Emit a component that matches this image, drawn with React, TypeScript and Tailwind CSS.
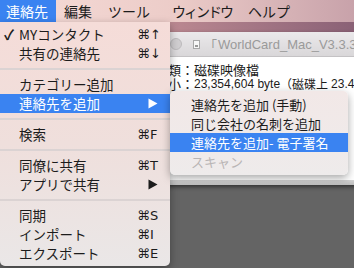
import React from "react";

const Tri = ({ color }: { color: string }) => (
  <svg width="10" height="11" viewBox="0 0 10 11">
    <path d="M0.5 0.5 L9.5 5.5 L0.5 10.5 Z" fill={color} />
  </svg>
);

type Item =
  | { sep: true }
  | { sep?: false; label: string; sc?: string; arrow?: boolean; hl?: boolean; check?: boolean };

const items: Item[] = [
  { label: "MYコンタクト", sc: "⌘↑", check: true },
  { label: "共有の連絡先", sc: "⌘↓" },
  { sep: true },
  { label: "カテゴリー追加" },
  { label: "連絡先を追加", arrow: true, hl: true },
  { sep: true },
  { label: "検索", sc: "⌘F" },
  { sep: true },
  { label: "同僚に共有", sc: "⌘T" },
  { label: "アプリで共有", arrow: true },
  { sep: true },
  { label: "同期", sc: "⌘S" },
  { label: "インポート", sc: "⌘I" },
  { label: "エクスポート", sc: "⌘E" },
];

const sub = [
  { label: "連絡先を追加 (手動)" },
  { label: "同じ会社の名刺を追加" },
  { label: "連絡先を追加- 電子署名", hl: true },
  { label: "スキャン", dis: true },
];

export default function App() {
  return (
    <div className="relative w-[354px] h-[268px] overflow-hidden bg-[#646464] font-['Noto_Sans_CJK_JP','DejaVu_Sans',sans-serif] text-[#1c1c1c]">
      {/* desktop strip */}
      <div className="absolute left-0 top-[22px] w-[354px] h-[14px] bg-gradient-to-r from-[#dcb0ae] via-[#b98790] to-[#8a6176]" />
      {/* background window */}
      <div className="absolute left-[120px] top-[32px] w-[260px] h-[153px] flex flex-col bg-white shadow-[0_2px_4px_rgba(0,0,0,0.5)] rounded-t-[5px] overflow-hidden">
        <div className="h-[25px] shrink-0 flex items-center bg-gradient-to-b from-[#ebe9eb] to-[#d9d7d9] border-b border-[#c4c2c4]">
          <div className="ml-[50px] shrink-0 w-[12px] h-[12px] rounded-full bg-[#d0ced0] border border-[#bdbbbd]" />
          <div className="ml-[11px] shrink-0 w-[7px] h-[9px] bg-[#f8f8f8] border border-[#a9a9a9] flex items-end justify-center">
            <div className="w-[3px] h-[2px] bg-[#9a9a9a] mb-[1px]" />
          </div>
          <span className="ml-[4px] shrink-0 text-[13px] text-[#9a9a9a] leading-none whitespace-nowrap flex items-center">
            <span className="font-['Noto_Sans_CJK_JP',sans-serif]">「</span>
            <span className="ml-[1px] font-['Liberation_Sans',sans-serif] text-[13px]">WorldCard_Mac_V3.3.3</span>
          </span>
        </div>
        <div className="pl-[35px] pt-[6px] text-[13px] leading-[14px] whitespace-nowrap">
          <div className="flex">
            <span className="w-[39px] shrink-0">種類：</span>
            <span className="shrink-0">磁碟映像檔</span>
          </div>
          <div className="flex text-[12px]">
            <span className="w-[39px] shrink-0 text-[13px]">大小：</span>
            <span className="shrink-0 font-['Liberation_Sans',sans-serif]">23,354,604 byte</span>
            <span className="shrink-0">（磁碟上</span>
            <span className="shrink-0 ml-[3px] font-['Liberation_Sans',sans-serif]">23.4 MB</span>
            <span className="shrink-0">）</span>
          </div>
          <div className="pl-[215px] mt-[2px]">(</div>
          <div className="pl-[215px] mt-[8px]">'</div>
          <div className="pl-[217px] mt-[4px] text-[#3a7df0]">~</div>
        </div>
        <div className="flex-1" />
        <div className="h-[5px] shrink-0 bg-gradient-to-b from-[#d4d4d4] to-[#bdbdbd]" />
      </div>

      {/* menu bar */}
      <div className="relative h-[22px] flex items-center text-[14px] bg-gradient-to-r from-[#f6dcd8] via-[#ecccc8] to-[#c8a2aa] whitespace-nowrap">
        <div className="w-[56px] h-full flex items-center pl-[6px] bg-[#3a83f1] text-white">連絡先</div>
        <div className="ml-[8px] w-[44px]">編集</div>
        <div className="w-[64px]">ツール</div>
        <div className="w-[76px] tracking-[-2px]">ウィンドウ</div>
        <div>ヘルプ</div>
      </div>

      {/* main menu */}
      <div className="absolute left-0 top-[22px] w-[170px] py-[3px] rounded-b-[5px] bg-gradient-to-b from-[#f5dcd8] via-[#efdfdc] to-[#eae7e7] shadow-[0_3px_8px_rgba(0,0,0,0.35)] text-[13.5px] whitespace-nowrap">
        {items.map((it, i) =>
          it.sep ? (
            <div key={i} className="h-[12px] flex items-center">
              <div className="w-full h-[2px] bg-[#dbd3d3]" />
            </div>
          ) : (
            <div
              key={i}
              className={`relative h-[19px] flex items-center pl-[19px] ${it.hl ? "bg-[#3a83f1] text-white" : ""}`}
            >
              {it.check && (
                <span className="absolute left-[4px] top-0 h-full flex items-center text-[14px] font-bold">✓</span>
              )}
              <span className="flex-1">{it.label}</span>
              {it.sc && (
                <span className="w-[21px] mr-[12px] font-['DejaVu_Sans',sans-serif] text-[13px] leading-none">{it.sc}</span>
              )}
              {it.arrow && (
                <span className="w-[21px] mr-[12px] flex justify-end">
                  <Tri color={it.hl ? "#ffffff" : "#1c1c1c"} />
                </span>
              )}
            </div>
          )
        )}
      </div>

      {/* submenu */}
      <div className="absolute left-[170px] top-[91px] w-[178px] py-[4px] rounded-[5px] bg-gradient-to-b from-[#f2e8e7] to-[#eeebeb] shadow-[0_3px_8px_rgba(0,0,0,0.35)] text-[13px] whitespace-nowrap">
        {sub.map((s, i) => (
          <div
            key={i}
            className={`h-[19px] flex items-center pl-[21px] ${s.hl ? "bg-[#3a83f1] text-white" : ""} ${s.dis ? "text-[#b9b5b5]" : ""}`}
          >
            {s.label}
          </div>
        ))}
      </div>
    </div>
  );
}
